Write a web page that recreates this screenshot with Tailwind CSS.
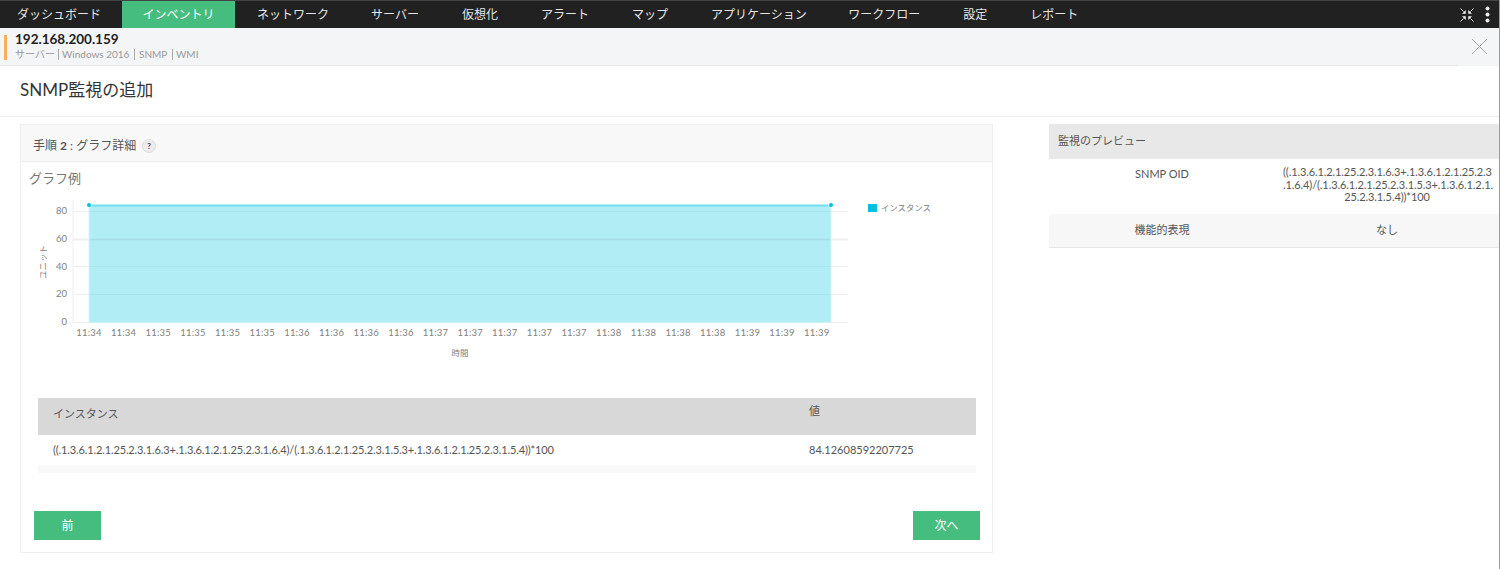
<!DOCTYPE html>
<html lang="ja">
<head>
    <meta charset="UTF-8">
    <meta name="viewport" content="width=device-width, initial-scale=1.0">
    <title>SNMP監視の追加</title>
    <script src="https://cdn.jsdelivr.net/npm/@tailwindcss/browser@4"></script>
</head>
<body class="bg-white h-[569px] overflow-hidden border-r border-[#9a9a9a] font-['Lato','Noto_Sans_CJK_JP',sans-serif] text-[#444]">

    <!-- Top navigation -->
    <nav class="flex items-stretch justify-between h-7 bg-[#212121] border-t border-[#444] text-[12px] text-[#e6e6e6]">
        <div class="flex">
            <a class="flex items-center pl-[17px] pr-[21px]">ダッシュボード</a>
            <a class="flex items-center w-[113px] justify-center bg-[#45bd7f] text-white">インベントリ</a>
            <a class="flex items-center pl-[22px] pr-[21px]">ネットワーク</a>
            <a class="flex items-center pl-[21px] pr-[21.5px]">サーバー</a>
            <a class="flex items-center px-[21.5px]">仮想化</a>
            <a class="flex items-center px-[21.5px]">アラート</a>
            <a class="flex items-center px-[21.5px]">マップ</a>
            <a class="flex items-center pl-[21.5px] pr-[20px]">アプリケーション</a>
            <a class="flex items-center px-[21.5px]">ワークフロー</a>
            <a class="flex items-center px-[21.5px]">設定</a>
            <a class="flex items-center px-[21.5px]">レポート</a>
        </div>
        <div class="flex items-center gap-[11px] pr-[9px]">
            <svg width="14" height="14" viewBox="0 0 14 14" fill="#f2f2f2" stroke="#f2f2f2" stroke-width="1">
                <path d="M.5.5l3 3" fill="none"/><path d="M5.5 5.5V2.5L2.5 5.5z" stroke-width=".5"/>
                <path d="M13.5.5l-3 3" fill="none"/><path d="M8.5 5.5V2.5L11.5 5.5z" stroke-width=".5"/>
                <path d="M.5 13.5l3-3" fill="none"/><path d="M5.5 8.5V11.5L2.5 8.5z" stroke-width=".5"/>
                <path d="M13.5 13.5l-3-3" fill="none"/><path d="M8.5 8.5V11.5L11.5 8.5z" stroke-width=".5"/>
            </svg>
            <svg width="5" height="17" viewBox="0 0 5 17" fill="#f2f2f2">
                <circle cx="2.5" cy="2.5" r="2"/><circle cx="2.5" cy="8.5" r="2"/><circle cx="2.5" cy="14.5" r="2"/>
            </svg>
        </div>
    </nav>

    <!-- Device header -->
    <div class="relative h-[38px] bg-[#f4f5f7] pl-[4px] flex items-center">
        <div class="w-[3px] h-[25px] bg-[#f7b05b]"></div>
        <div class="ml-2">
            <div class="text-[13.5px] leading-[15px] font-bold text-[#222]">192.168.200.159</div>
            <div class="flex items-center h-[15px] text-[10px] leading-[11px] text-[#999]">
                <span class="w-[43px]">サーバー</span>
                <span class="w-[76px] border-l border-[#aaa] pl-[3px]">Windows 2016</span>
                <span class="w-[38px] border-l border-[#aaa] pl-[4px]">SNMP</span>
                <span class="border-l border-[#aaa] pl-[3px]">WMI</span>
            </div>
        </div>
        <div class="absolute left-0 bottom-0 w-[1458px] h-px bg-[#e6e6e6]"></div>
        <svg class="absolute left-[1471px] top-[10px]" width="17" height="17" viewBox="0 0 17 17" stroke="#a8a8a8" stroke-width="1">
            <path d="M1 1l15 15M16 1L1 16"/>
        </svg>
    </div>

    <!-- Page title -->
    <div class="h-[51px] pl-5 flex items-center border-b border-[#eee] text-[17px] text-[#333] pb-[3px]">SNMP監視の追加</div>

    <!-- Content -->
    <div class="flex items-start pt-[7px]">
        <!-- Step card -->
        <div class="ml-5 w-[973px] h-[429px] border border-[#eee] flex flex-col">
            <div class="h-[37px] shrink-0 bg-[#f8f8f8] border-b border-[#eee] pl-3 pt-[6px] flex items-center text-[12px] text-[#555]">
                <span>手順 <b class="font-bold">2</b> : グラフ詳細</span>
                <span class="ml-[6px] w-[14px] h-[14px] rounded-full bg-[#ececec] border border-[#ddd] flex items-center justify-center text-[8px] font-bold text-[#444]">?</span>
            </div>
            <div class="pl-2 pt-[8px] text-[13px] leading-[16px] text-[#777]">グラフ例</div>

            <!-- Chart -->
            <svg class="block -mt-[11px] ml-[-1px]" width="971" height="186" viewBox="20 174 971 186">
                <g stroke="#efefef" stroke-width="1">
                    <path d="M73 198.5V321.5"/>
                    <path d="M73 210.5H848M73 265.5H848M73 293.5H848M73 321.5H848"/>
                    <path d="M73 238.5H848" stroke-width="2"/>
                </g>
                <rect x="89" y="204" width="742" height="117.5" fill="#b1edf5"/>
                <path d="M89 238.5H831" stroke="#a4dde6" stroke-width="1.5"/>
                <path d="M89 210.5H831M89 265.5H831M89 293.5H831" stroke="#a9e4ec" stroke-width="1"/>
                <path d="M92 204.5H828" stroke="#6fe0ef" stroke-width="2"/>
                <path d="M89 204V321M831 204V321" stroke="#d3f5fa" stroke-width="1"/>
                <circle cx="89" cy="204" r="2" fill="#00c0e0"/>
                <circle cx="831" cy="204" r="2" fill="#00c0e0"/>
                <g font-size="9.5" fill="#808080" text-anchor="end">
                    <text x="67" y="213">80</text>
                    <text x="67" y="241">60</text>
                    <text x="67" y="269">40</text>
                    <text x="67" y="296">20</text>
                    <text x="67" y="324">0</text>
                </g>
                <text transform="translate(46 261) rotate(-90)" font-size="8.5" fill="#808080" text-anchor="middle">ユニット</text>
                <g font-size="9.5" fill="#808080" text-anchor="middle" letter-spacing=".2">
                    <text x="89" y="335">11:34</text>
                    <text x="123.6" y="335">11:34</text>
                    <text x="158.3" y="335">11:35</text>
                    <text x="193" y="335">11:35</text>
                    <text x="227.6" y="335">11:35</text>
                    <text x="262.3" y="335">11:35</text>
                    <text x="296.9" y="335">11:36</text>
                    <text x="331.6" y="335">11:36</text>
                    <text x="366.2" y="335">11:36</text>
                    <text x="400.9" y="335">11:36</text>
                    <text x="435.5" y="335">11:37</text>
                    <text x="470.2" y="335">11:37</text>
                    <text x="504.8" y="335">11:37</text>
                    <text x="539.5" y="335">11:37</text>
                    <text x="574.1" y="335">11:37</text>
                    <text x="608.8" y="335">11:38</text>
                    <text x="643.4" y="335">11:38</text>
                    <text x="678.1" y="335">11:38</text>
                    <text x="712.7" y="335">11:38</text>
                    <text x="747.4" y="335">11:39</text>
                    <text x="782" y="335">11:39</text>
                    <text x="816.7" y="335">11:39</text>
                </g>
                <text x="460" y="355" font-size="8.5" fill="#808080" text-anchor="middle">時間</text>
                <rect x="868" y="203" width="9" height="8" fill="#00c0e0"/>
                <text x="881" y="210" font-size="8.4" fill="#808080">インスタンス</text>
            </svg>

            <!-- Value table -->
            <div class="ml-[17px] mr-[16px] mt-[37px] text-[#555]">
                <div class="h-[37px] bg-[#d8d8d8] flex text-[11px]">
                    <div class="w-[771px] pl-[15px] pt-[8px]">インスタンス</div>
                    <div class="pt-[5px]">値</div>
                </div>
                <div class="h-[30px] flex items-center text-[11px]">
                    <div class="w-[771px] pl-[15px] tracking-[-0.13px]">((.1.3.6.1.2.1.25.2.3.1.6.3+.1.3.6.1.2.1.25.2.3.1.6.4)/(.1.3.6.1.2.1.25.2.3.1.5.3+.1.3.6.1.2.1.25.2.3.1.5.4))*100</div>
                    <div>84.12608592207725</div>
                </div>
                <div class="h-2 bg-[#f9f9fa]"></div>
            </div>

            <!-- Buttons -->
            <div class="flex justify-between ml-[13px] mr-[12px] mt-[38px] text-[12px] text-white">
                <button class="w-[67px] h-[29px] bg-[#45bd7f]">前</button>
                <button class="w-[67px] h-[29px] bg-[#45bd7f]">次へ</button>
            </div>
        </div>

        <!-- Monitor preview -->
        <div class="ml-[56px] w-[450px] border-b border-[#e6e6e6] text-[11px] text-[#555]">
            <div class="h-[35px] bg-[#e8e8e9] pl-[9px] flex items-center">監視のプレビュー</div>
            <div class="flex h-[55px] pt-[7px]">
                <div class="w-[226px] text-center">SNMP OID</div>
                <div class="w-[224px] px-2 text-center leading-[12.5px] tracking-[-0.1px]">((.1.3.6.1.2.1.25.2.3.1.6.3+.1.3.6.1.2.1.25.2.3<br>.1.6.4)/(.1.3.6.1.2.1.25.2.3.1.5.3+.1.3.6.1.2.1.<br>25.2.3.1.5.4))*100</div>
            </div>
            <div class="flex items-center h-[33px] bg-[#f7f7f8]">
                <div class="w-[226px] text-center">機能的表現</div>
                <div class="w-[224px] text-center">なし</div>
            </div>
        </div>
    </div>

</body>
</html>
